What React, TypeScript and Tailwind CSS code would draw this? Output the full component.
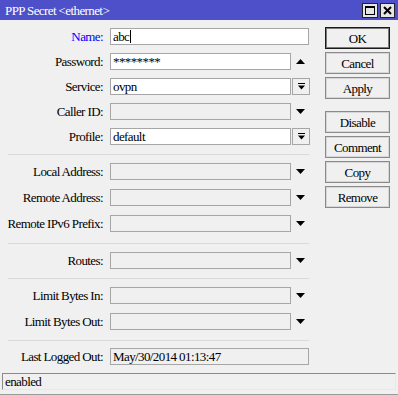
import React from 'react';

type Kind = 'none' | 'down' | 'up' | 'combo';

const DownTri = () => (
  <svg width="9" height="5" viewBox="0 0 9 5">
    <polygon points="0,0 9,0 4.5,5" fill="#000" />
  </svg>
);

const UpTri = () => (
  <svg width="9" height="5" viewBox="0 0 9 5">
    <polygon points="0,5 9,5 4.5,0" fill="#000" />
  </svg>
);

const ComboIcon = () => (
  <svg width="7" height="7" viewBox="0 0 7 7">
    <rect x="0" y="0" width="7" height="1" fill="#000" />
    <polygon points="0,2.5 7,2.5 3.5,6.5" fill="#000" />
  </svg>
);

const Field: React.FC<{
  label: string;
  value?: string;
  kind?: Kind;
  white?: boolean;
  blue?: boolean;
  caret?: boolean;
}> = ({ label, value = '', kind = 'none', white = false, blue = false, caret = false }) => {
  const full = kind === 'none';
  return (
    <div className="flex h-[17px] items-center">
      <div className={`w-[103px] text-right leading-none ${blue ? 'text-[#0000ff]' : 'text-black'}`}>{label}:</div>
      <div
        className={`ml-[7px] flex h-[17px] items-center border border-[#a6a6a6] px-[2px] leading-none ${
          full ? 'w-[199px]' : 'w-[181px]'
        } ${white ? 'bg-white' : 'bg-[#f0f0f0]'}`}
      >
        <span className="whitespace-nowrap">{value}</span>
        {caret && <span className="ml-[1px] inline-block h-[13px] w-[1px] bg-black" />}
      </div>
      {kind === 'combo' && (
        <div className="ml-[1px] flex h-[17px] w-[18px] items-center justify-center border border-[#a6a6a6] bg-[#f0f0f0]">
          <ComboIcon />
        </div>
      )}
      {kind === 'down' && (
        <div className="flex h-[17px] w-[19px] items-center justify-center">
          <DownTri />
        </div>
      )}
      {kind === 'up' && (
        <div className="flex h-[17px] w-[19px] items-center justify-center">
          <UpTri />
        </div>
      )}
    </div>
  );
};

const Sep: React.FC<{ top: string; bottom: string }> = ({ top, bottom }) => (
  <div className={`ml-[8px] h-[1px] w-[301px] bg-[#d9d9d9] ${top} ${bottom}`} />
);

const Btn: React.FC<{ label: string; primary?: boolean }> = ({ label, primary = false }) => (
  <button
    className={`flex h-[22px] w-[65px] items-center justify-center border bg-[#f0f0f0] leading-none text-black ${
      primary
        ? 'border-[#1a1a1a] shadow-[inset_0_0_0_1px_#7a7a7a]'
        : 'border-[#8a8a8a] shadow-[inset_0_0_0_1px_#d6d6d6]'
    }`}
  >
    {label}
  </button>
);

export default function App() {
  return (
    <div className="flex h-[395px] w-[398px] flex-col bg-[#f0f0f0] text-[13px] tracking-[-0.6px] text-black [font-family:'Liberation_Serif','Times_New_Roman',serif]">
      {/* Title bar */}
      <div className="flex h-[20px] items-center justify-between bg-[#4d50c9] pl-[5px] pr-[3px]">
        <span className="leading-none text-white">PPP Secret &lt;ethernet&gt;</span>
        <div className="flex gap-[2px]">
          <div className="flex h-[15px] w-[16px] items-center justify-center border border-[#222] bg-[#e6e6e6]">
            <div className="h-[9px] w-[10px] border border-black border-t-2" />
          </div>
          <div className="flex h-[15px] w-[15px] items-center justify-center border border-[#222] bg-[#e6e6e6]">
            <svg width="9" height="9" viewBox="0 0 9 9">
              <path d="M1 1 L8 8 M8 1 L1 8" stroke="#000" strokeWidth="2" />
            </svg>
          </div>
        </div>
      </div>

      {/* Body */}
      <div className="flex flex-1">
        <div className="flex w-[325px] flex-col pt-[8px]">
          <div className="flex flex-col gap-[8px]">
            <Field label="Name" value="abc" white blue caret />
            <Field label="Password" value="********" white kind="up" />
            <Field label="Service" value="ovpn" white kind="combo" />
            <Field label="Caller ID" kind="down" />
            <Field label="Profile" value="default" white kind="combo" />
          </div>
          <Sep top="mt-[9px]" bottom="mb-[8px]" />
          <div className="flex flex-col gap-[9px]">
            <Field label="Local Address" kind="down" />
            <Field label="Remote Address" kind="down" />
            <Field label="Remote IPv6 Prefix" kind="down" />
          </div>
          <Sep top="mt-[11px]" bottom="mb-[8px]" />
          <Field label="Routes" kind="down" />
          <Sep top="mt-[9px]" bottom="mb-[8px]" />
          <div className="flex flex-col gap-[9px]">
            <Field label="Limit Bytes In" kind="down" />
            <Field label="Limit Bytes Out" kind="down" />
          </div>
          <Sep top="mt-[10px]" bottom="mb-[7px]" />
          <Field label="Last Logged Out" value="May/30/2014 01:13:47" />
        </div>

        <div className="flex flex-col pt-[7px]">
          <div className="flex flex-col gap-[3px]">
            <Btn label="OK" primary />
            <Btn label="Cancel" />
            <Btn label="Apply" />
          </div>
          <div className="mt-[12px] flex flex-col gap-[3px]">
            <Btn label="Disable" />
            <Btn label="Comment" />
            <Btn label="Copy" />
            <Btn label="Remove" />
          </div>
        </div>
      </div>

      {/* Status bar */}
      <div className="mx-[2px] mb-[4px] flex h-[17px] items-center border border-[#8a8a8a] border-r-[#e8e8e8] border-b-[#e8e8e8] px-[2px] leading-none">
        enabled
      </div>
      <div className="h-[1px] bg-[#9a9a9a]" />
    </div>
  );
}
